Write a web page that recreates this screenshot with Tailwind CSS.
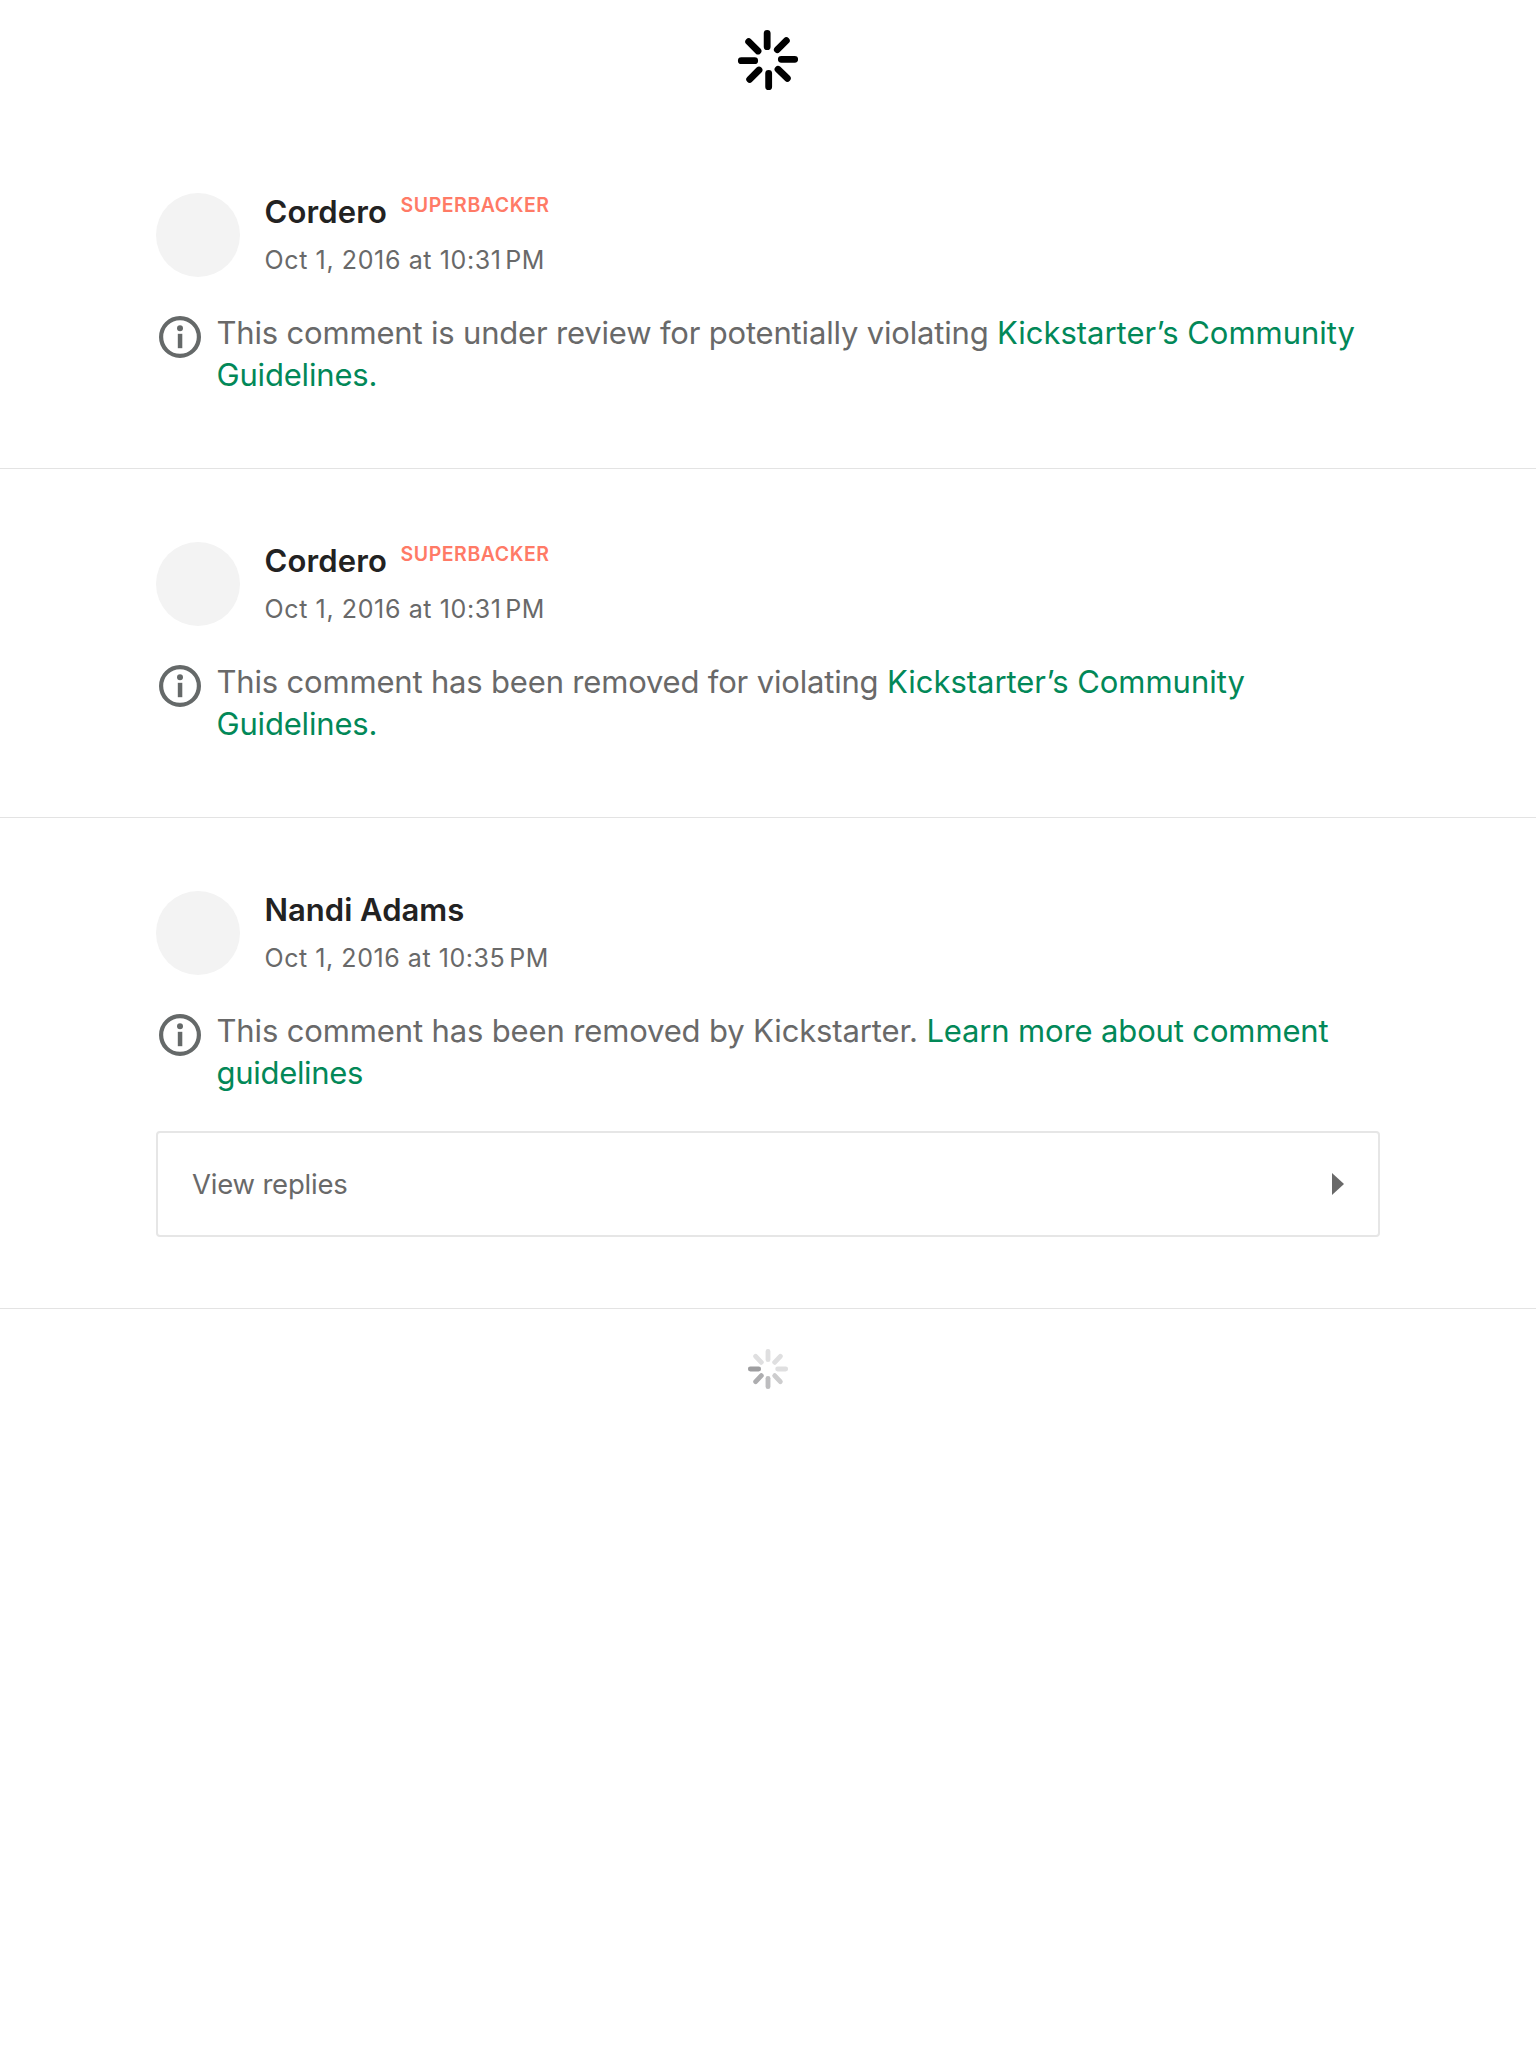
<!DOCTYPE html>
<html lang="en"><head><meta charset="utf-8"><title>Comments</title><script src="https://cdn.jsdelivr.net/npm/@tailwindcss/browser@4"></script></head>
<body class="bg-white font-['Inter',sans-serif] text-[#696969]">
<svg class="hidden"><symbol id="info" viewBox="0 0 42 42"><circle cx="21" cy="21" r="18.9" fill="none" stroke="#656969" stroke-width="4.2"/><circle cx="21" cy="12.3" r="3" fill="#656969"/><path d="M18.8 17.8h4.5v14.4h-4.5z" fill="#656969"/></symbol></svg>
<header class="flex h-[120px] items-center justify-center">
<svg class="size-20" viewBox="0 0 240 240" fill="none" stroke="#000" stroke-width="20.5" stroke-linecap="round"><path d="M117.5 40V80M175 62L148 89M200 118H160M178 175L150 148M122 200V160M65 178L93 150M40 122H80M62 65L90 93"/></svg>
</header>
<main>
<article class="border-b border-[#e3e3e3] px-[156px] pt-[73px] pb-[72px]">
<div class="flex gap-[24.5px]"><div class="size-[84px] rounded-full bg-[#f3f3f3]"></div>
<div class="flex flex-col gap-[13px]"><div class="flex items-start whitespace-nowrap"><h2 class="w-[136px] text-[31px] leading-[38px] font-semibold tracking-[0.15px] text-[#222]">Cordero</h2><span class="text-[19.5px] leading-6 font-semibold tracking-[0.55px] text-[#ff7a66]">SUPERBACKER</span></div>
<p class="text-[25px] leading-8 tracking-[0.62px] whitespace-nowrap">Oct 1, 2016 at 10:31<span class="ml-[3.5px]">PM</span></p></div></div>
<div class="mt-[35px] flex"><svg class="mt-1 mr-[15.5px] ml-[3px] size-[42px] shrink-0"><use href="#info"/></svg>
<p class="text-[31px] leading-[42px] tracking-[-0.18px] whitespace-nowrap">This comment is under review for potentially violating <a class="text-[#028858]"><span class="tracking-[-0.03px]">Kickstarter’s Community</span><br>Guidelines.</a></p></div>
</article>
<article class="border-b border-[#e3e3e3] px-[156px] pt-[73px] pb-[72px]">
<div class="flex gap-[24.5px]"><div class="size-[84px] rounded-full bg-[#f3f3f3]"></div>
<div class="flex flex-col gap-[13px]"><div class="flex items-start whitespace-nowrap"><h2 class="w-[136px] text-[31px] leading-[38px] font-semibold tracking-[0.15px] text-[#222]">Cordero</h2><span class="text-[19.5px] leading-6 font-semibold tracking-[0.55px] text-[#ff7a66]">SUPERBACKER</span></div>
<p class="text-[25px] leading-8 tracking-[0.62px] whitespace-nowrap">Oct 1, 2016 at 10:31<span class="ml-[3.5px]">PM</span></p></div></div>
<div class="mt-[35px] flex"><svg class="mt-1 mr-[15.5px] ml-[3px] size-[42px] shrink-0"><use href="#info"/></svg>
<p class="text-[31px] leading-[42px] tracking-[-0.18px] whitespace-nowrap">This comment has been removed for violating <a class="text-[#028858]"><span class="tracking-[-0.03px]">Kickstarter’s Community</span><br>Guidelines.</a></p></div>
</article>
<article class="border-b border-[#e3e3e3] px-[156px] pt-[73px] pb-[71px]">
<div class="flex gap-[24.5px]"><div class="size-[84px] rounded-full bg-[#f3f3f3]"></div>
<div class="flex flex-col gap-[13px]"><h2 class="text-[31px] leading-[38px] font-semibold text-[#222]">Nandi Adams</h2>
<p class="text-[25px] leading-8 tracking-[0.55px] whitespace-nowrap">Oct 1, 2016 at 10:35<span class="ml-1">PM</span></p></div></div>
<div class="mt-[35px] flex"><svg class="mt-1 mr-[15.5px] ml-[3px] size-[42px] shrink-0"><use href="#info"/></svg>
<p class="text-[31px] leading-[42px] tracking-[-0.14px] whitespace-nowrap">This comment has been removed by Kickstarter. <a class="text-[#028858]">Learn more about comment<br><span class="tracking-[-0.3px]">guidelines</span></a></p></div>
<button class="mt-[37px] flex h-[106px] w-full items-center justify-between rounded border-2 border-[#e6e6e6] px-[34px] text-[27.5px] leading-10 tracking-[-0.2px]"><span>View replies</span><svg class="h-[22px] w-3" viewBox="0 0 12 22"><path d="M0 0L12 11L0 22z" fill="#696969"/></svg></button>
</article>
</main>
<div class="mt-[21px] flex justify-center"><svg class="size-20" viewBox="0 0 240 240" stroke-width="14.5" stroke-linecap="round"><g stroke="#dfdfe0"><path d="M120 64V89M157 79L140 97M173 117H149M83 79L100 97"/></g><path stroke="#cdcdce" d="M157 155L140 137"/><path stroke="#bdbdbf" d="M120 170V145"/><path stroke="#adadaf" d="M83 155L100 137"/><path stroke="#9e9ea0" d="M67 117H92"/></svg></div>
</body></html>
